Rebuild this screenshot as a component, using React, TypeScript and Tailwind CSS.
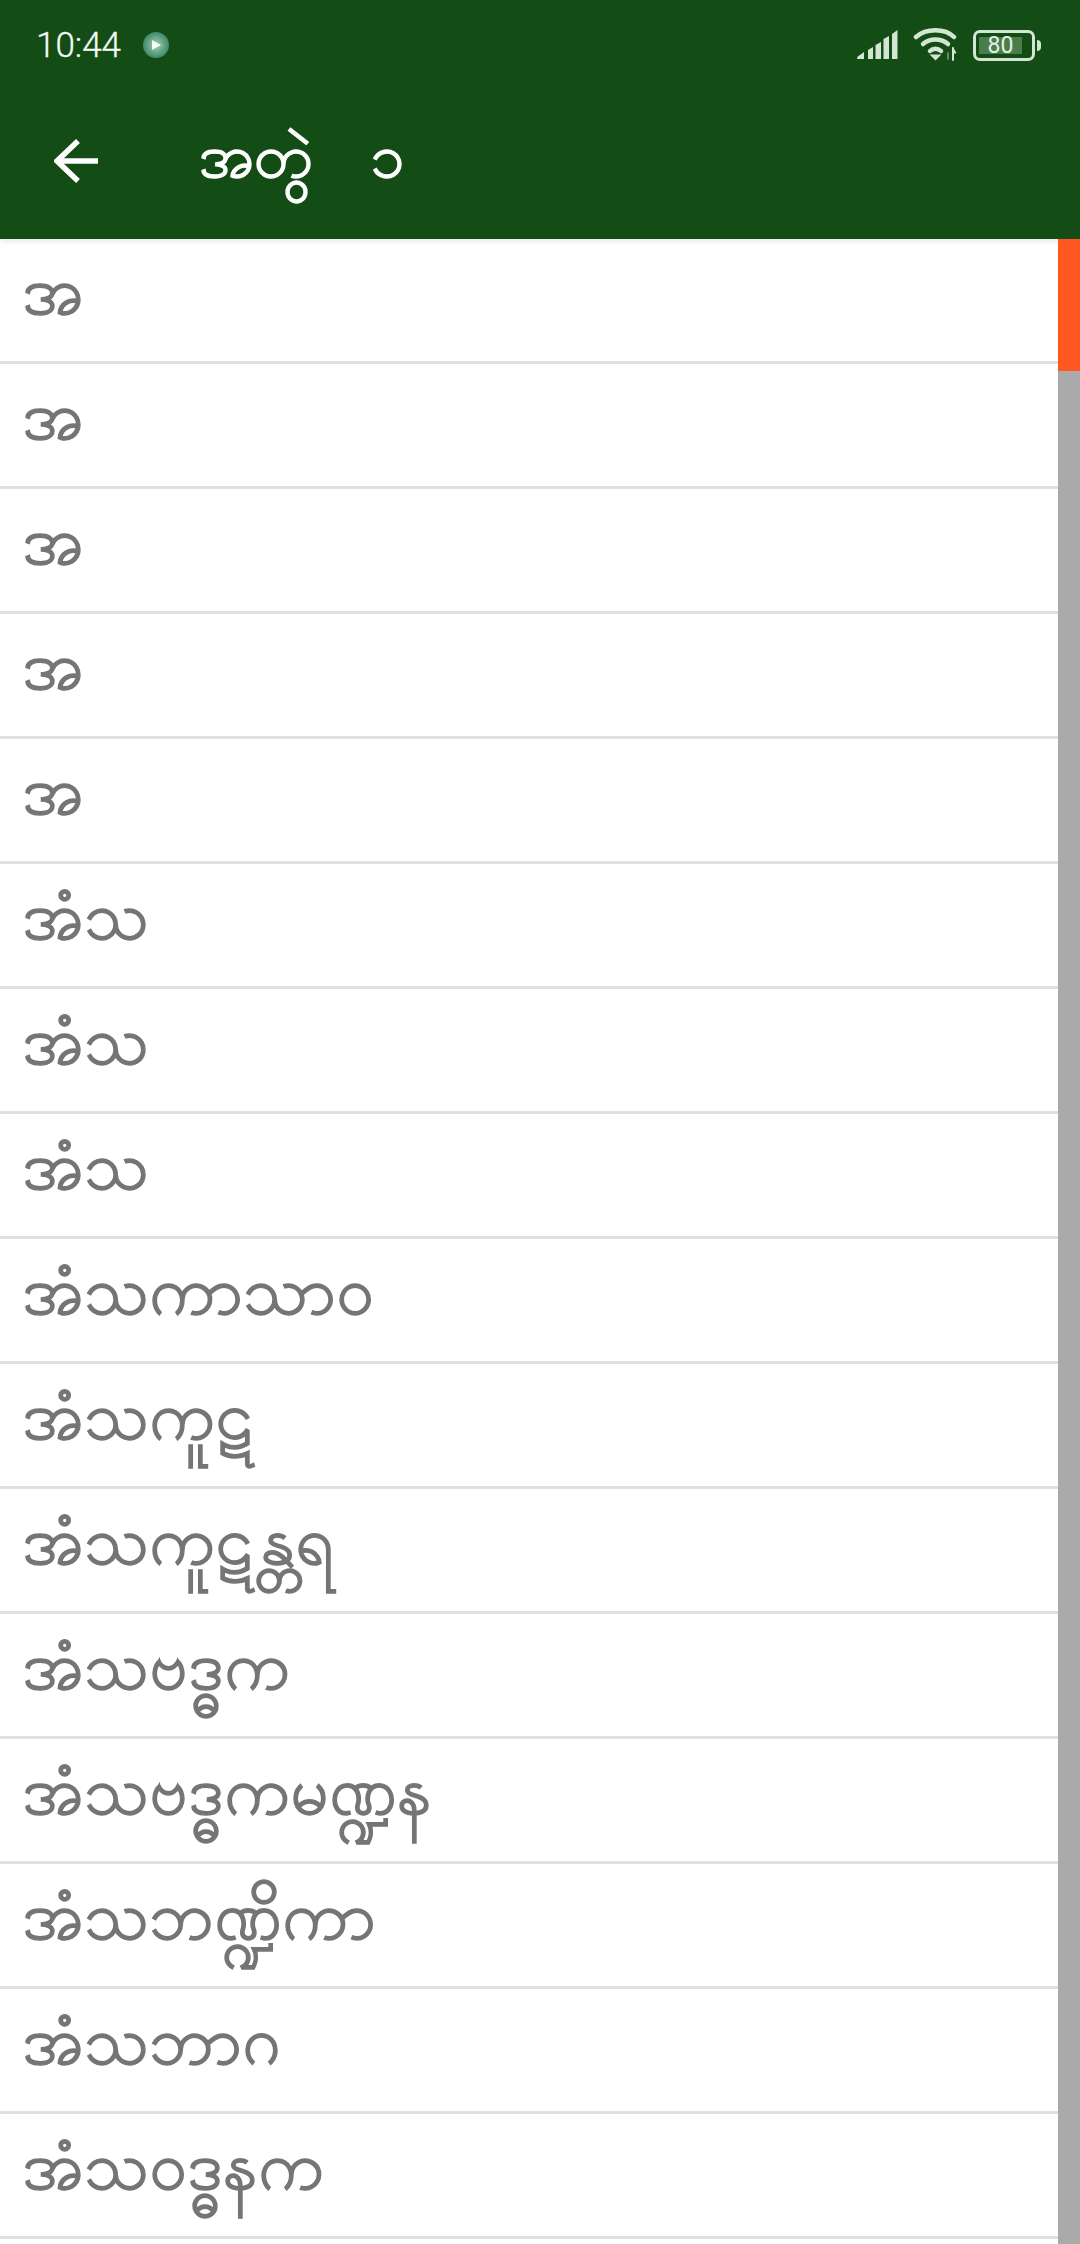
const rows = [
  "အ","အ","အ","အ","အ",
  "အံသ","အံသ","အံသ",
  "အံသကာသာဝ","အံသကူဋ","အံသကူဋန္တရ","အံသဗဒ္ဓက","အံသဗဒ္ဓကမဏ္ဍန","အံသဘဏ္ဍိကာ","အံသဘာဂ","အံသဝဒ္ဓနက",
];

function Signal() {
  return (
    <svg width="42" height="30" viewBox="0 0 42 30" fill="#d3e6d3">
      <path d="M0 29 Q0 26 3 25 L7 22 V29 Z" />
      <path d="M11 20 L16 17 V29 H11 Z" />
      <path d="M18.5 15 L24 12 V29 H18.5 Z" />
      <path d="M26.5 9 L32 6 V29 H26.5 Z" />
      <path d="M35 4 L40.5 0 V29 H35 Z" />
    </svg>
  );
}

function Wifi() {
  return (
    <svg width="46" height="34" viewBox="0 0 46 34" fill="none" stroke="#d3e6d3" strokeWidth="4.5" strokeLinecap="round">
      <path d="M3 9 C13 0 32 0 41 9" />
      <path d="M10 16 C17 10 28 10 35 16" />
      <path d="M17 23 C20 20 25 20 28 23" />
      <path d="M22.5 31 L19 27.5 H26 Z" fill="#d3e6d3" strokeWidth="2" />
      <path d="M40 20 V32" strokeWidth="2" />
      <path d="M40 20 L43 25 H40 Z" fill="#d3e6d3" strokeWidth="1" />
      <path d="M35 25 V31" strokeWidth="2" stroke="#5b8a5b" />
    </svg>
  );
}

function Battery() {
  return (
    <div className="flex items-center gap-[2px]">
      <div className="flex h-[31px] w-[62px] items-center rounded-[7px] border-[3.5px] border-[#d3e6d3] px-[3px]">
        <div className="flex h-[17px] w-[43px] items-center justify-center bg-[#4a7d4c]">
          <span className="text-[23px] leading-none text-[#e4f0e4]">80</span>
        </div>
      </div>
      <div className="h-[11px] w-[4px] rounded-r-full bg-[#d3e6d3]" />
    </div>
  );
}

export default function App() {
  return (
    <div className="flex h-[2244px] w-[1080px] flex-col overflow-hidden bg-white font-['Roboto','Noto_Sans',sans-serif]">
      <header className="relative z-10 flex h-[239px] flex-col bg-[#134c14] pb-[7px] shadow-[0_2px_6px_rgba(0,0,0,0.1)]">
        <div className="flex h-[90px] items-center justify-between pl-[36px] pr-[39px]">
          <div className="flex items-center gap-[22px]">
            <span className="text-[35px] font-light leading-none text-[#f4faf4] [-webkit-text-stroke:0.3px_#f4faf4]">10:44</span>
            <div className="flex h-[26px] w-[26px] items-center justify-center rounded-full bg-[radial-gradient(circle,#a6d0b4_0%,#4c9474_60%,#2c6c50_100%)]">
              <svg width="12" height="12" viewBox="0 0 12 12" fill="#f2fff2"><path d="M2 1 L11 6 L2 11 Z" /></svg>
            </div>
          </div>
          <div className="flex items-center gap-[14px]">
            <Signal />
            <Wifi />
            <Battery />
          </div>
        </div>
        <div className="flex h-[142px] items-center pl-[54px]">
          <svg width="44" height="44" viewBox="0 0 44 44" fill="none" stroke="#ffffff" strokeWidth="5.5">
            <path d="M44 22 H4" />
            <path d="M24 2 L3 22 L24 42" />
          </svg>
          <div className="ml-[101px] flex items-center gap-[57px] pb-[10px] text-[61px] leading-none text-white [-webkit-text-stroke:1.3px_#ffffff]">
            <span>အတွဲ</span>
            <span>၁</span>
          </div>
        </div>
      </header>
      <main className="flex min-h-0 flex-1">
        <ul className="min-w-0 flex-1">
          {rows.map((t, i) => (
            <li
              key={i}
              className="flex h-[125px] items-center border-b-[3px] border-[#e0e0e0] pb-[17px] pl-[22px] text-[67px] leading-none text-[#757575] [-webkit-text-stroke:1.4px_#757575]"
            >
              {t}
            </li>
          ))}
        </ul>
        <div className="relative z-20 flex w-[22px] flex-col bg-[#aaaaaa]">
          <div className="h-[132px] bg-[#ff5722]" />
        </div>
      </main>
    </div>
  );
}
